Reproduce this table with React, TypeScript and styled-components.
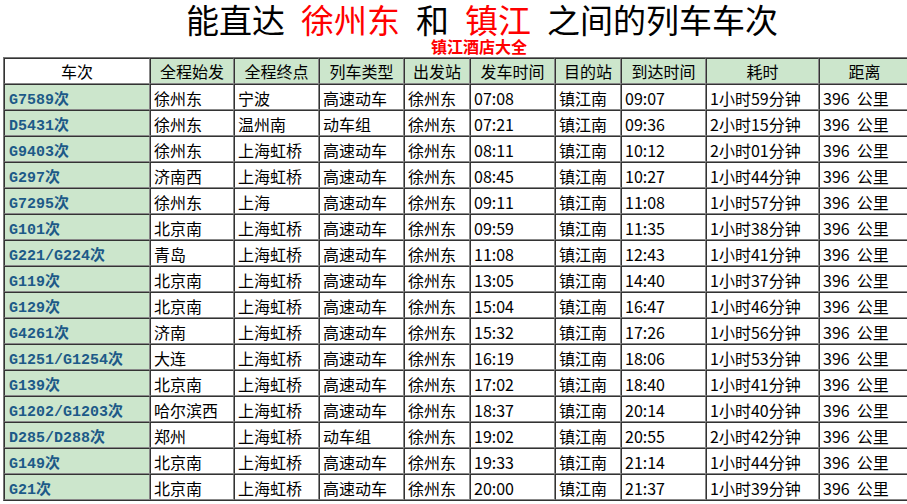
import styled, { createGlobalStyle } from 'styled-components';

const GlobalStyle = createGlobalStyle`
  html, body {
    margin: 0;
    padding: 0;
    background: #fff;
    overflow: hidden;
  }
  body {
    font-family: 'Noto Sans CJK SC', 'DejaVu Sans', sans-serif;
    color: #000;
  }
`;

const Page = styled.div`
  width: 907px;
  height: 504px;
  overflow: hidden;
  padding-left: 3px;
  box-sizing: border-box;
`;

const Title = styled.h1`
  margin: 0;
  padding: 0 0 0 54px;
  height: 38px;
  display: flex;
  align-items: center;
  justify-content: center;
  font-size: 33px;
  line-height: 38px;
  font-weight: 400;
  white-space: nowrap;
`;

const Place = styled.span`
  color: #ff0000;
  margin: 0 16px;
`;

const Sub = styled.div`
  padding-left: 48px;
  height: 19px;
  line-height: 17px;
  font-size: 16px;
  font-weight: 700;
  color: #ff0000;
  text-align: center;
`;

const Table = styled.table`
  table-layout: fixed;
  width: 906px;
  border-collapse: separate;
  border-spacing: 0;
  border: 1px solid;
  border-color: #777 #333 #333 #777;
`;

const Head = styled.th<{ $plain?: boolean }>`
  height: 26px;
  box-sizing: border-box;
  padding: 0;
  font-size: 16px;
  font-weight: 400;
  text-align: center;
  line-height: 18px;
  vertical-align: middle;
  background: ${({ $plain }) => ($plain ? '#fff' : '#cce6cc')};
  border: 1px solid;
  border-color: #333 #888 #888 #333;
  white-space: nowrap;
  overflow: hidden;
`;

const Cell = styled.td`
  height: 26px;
  box-sizing: border-box;
  padding: 1px 0 0 3px;
  font-size: 16px;
  line-height: 18px;
  vertical-align: middle;
  text-align: left;
  background: #fff;
  border: 1px solid;
  border-color: #333 #888 #888 #333;
  white-space: nowrap;
  overflow: hidden;
`;

const TrainCell = styled(Cell)`
  background: #cce6cc;
  color: #1d5a88;
  font-family: 'Liberation Mono', 'Noto Sans CJK SC', monospace;
  font-weight: 700;
  font-size: 15px;
  line-height: 16px;
  padding: 7px 0 0 4px;
`;

const widths = [146, 84, 85, 85, 66, 85, 66, 85, 113, 91];

const headers = ['车次', '全程始发', '全程终点', '列车类型', '出发站', '发车时间', '目的站', '到达时间', '耗时', '距离'];

type Train = [string, string, string, string, string, string, string];

const trains: Train[] = [
  ['G7589次', '徐州东', '宁波', '高速动车', '07:08', '09:07', '1小时59分钟'],
  ['D5431次', '徐州东', '温州南', '动车组', '07:21', '09:36', '2小时15分钟'],
  ['G9403次', '徐州东', '上海虹桥', '高速动车', '08:11', '10:12', '2小时01分钟'],
  ['G297次', '济南西', '上海虹桥', '高速动车', '08:45', '10:27', '1小时44分钟'],
  ['G7295次', '徐州东', '上海', '高速动车', '09:11', '11:08', '1小时57分钟'],
  ['G101次', '北京南', '上海虹桥', '高速动车', '09:59', '11:35', '1小时38分钟'],
  ['G221/G224次', '青岛', '上海虹桥', '高速动车', '11:08', '12:43', '1小时41分钟'],
  ['G119次', '北京南', '上海虹桥', '高速动车', '13:05', '14:40', '1小时37分钟'],
  ['G129次', '北京南', '上海虹桥', '高速动车', '15:04', '16:47', '1小时46分钟'],
  ['G4261次', '济南', '上海虹桥', '高速动车', '15:32', '17:26', '1小时56分钟'],
  ['G1251/G1254次', '大连', '上海虹桥', '高速动车', '16:19', '18:06', '1小时53分钟'],
  ['G139次', '北京南', '上海虹桥', '高速动车', '17:02', '18:40', '1小时41分钟'],
  ['G1202/G1203次', '哈尔滨西', '上海虹桥', '高速动车', '18:37', '20:14', '1小时40分钟'],
  ['D285/D288次', '郑州', '上海虹桥', '动车组', '19:02', '20:55', '2小时42分钟'],
  ['G149次', '北京南', '上海虹桥', '高速动车', '19:33', '21:14', '1小时44分钟'],
  ['G21次', '北京南', '上海虹桥', '高速动车', '20:00', '21:37', '1小时39分钟'],
];

const App = () => {
  return (
    <Page>
      <GlobalStyle />
      <Title>
        能直达<Place>徐州东</Place>和<Place>镇江</Place>之间的列车车次
      </Title>
      <Sub>镇江酒店大全</Sub>
      <Table>
        <colgroup>
          {widths.map((w, i) => (
            <col key={i} style={{ width: w }} />
          ))}
        </colgroup>
        <thead>
          <tr>
            {headers.map((h, i) => (
              <Head key={h} $plain={i === 0}>
                {h}
              </Head>
            ))}
          </tr>
        </thead>
        <tbody>
          {trains.map(([no, from, to, type, dep, arr, dur]) => (
            <tr key={no}>
              <TrainCell>{no}</TrainCell>
              <Cell>{from}</Cell>
              <Cell>{to}</Cell>
              <Cell>{type}</Cell>
              <Cell>徐州东</Cell>
              <Cell>{dep}</Cell>
              <Cell>镇江南</Cell>
              <Cell>{arr}</Cell>
              <Cell>{dur}</Cell>
              <Cell>396&nbsp;&nbsp;公里</Cell>
            </tr>
          ))}
        </tbody>
      </Table>
    </Page>
  );
};

export default App;
